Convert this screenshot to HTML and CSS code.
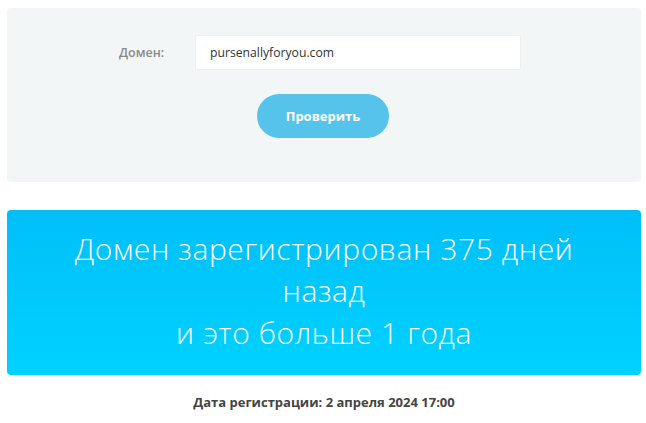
FILE: index.html
```html
<!DOCTYPE html>
<html lang="ru">
<head>
<meta charset="utf-8">
<link rel="stylesheet" href="styles.css">
</head>
<body>
<div class="page">
  <form class="check-panel">
    <div class="form-row">
      <label class="label" for="domain">Домен:</label>
      <div class="input">pursenallyforyou.com</div>
    </div>
    <div class="actions">
      <button type="button" class="btn">Проверить</button>
    </div>
  </form>
  <div class="result">
    <p class="result-text">Домен зарегистрирован 375 дней<br>назад<br>и это больше 1 года</p>
  </div>
  <p class="date">Дата регистрации: 2 апреля 2024 17:00</p>
</div>
</body>
</html>
```
FILE: styles.css
```css
* { box-sizing: border-box; }
html, body { margin: 0; padding: 0; background: #ffffff; }
body { font-family: "Open Sans", "Noto Sans", sans-serif; }
.page {
  padding: 8px 5px 0 7px;
}
.check-panel {
  margin: 0;
  background: #f3f6f7;
  border-radius: 4px;
  padding: 27px 0 44px;
  display: flex;
  flex-direction: column;
  gap: 24px;
}
.form-row {
  display: flex;
  align-items: center;
  padding-left: 112px;
}
.label {
  width: 76px;
  font-size: 12.5px;
  font-weight: 600;
  color: #8a8a8a;
}
.input {
  width: 326px;
  height: 35px;
  background: #ffffff;
  border: 1px solid #eceff0;
  border-radius: 2px;
  padding-left: 14px;
  display: flex;
  align-items: center;
  font-size: 12.2px;
  color: #333333;
}
.actions {
  display: flex;
  justify-content: center;
  padding-right: 2px;
}
.btn {
  width: 132px;
  height: 44px;
  border: none;
  border-radius: 22px;
  background: #56c3eb;
  color: #ffffff;
  font-family: "Open Sans", sans-serif;
  font-weight: 700;
  font-size: 13px;
}
.result {
  margin-top: 28px;
  background: linear-gradient(180deg, #00bff9 0%, #00d2ff 100%);
  border-radius: 4px;
  padding: 18px 0 21px;
  text-align: center;
}
.result-text {
  margin: 0;
  color: #ffffff;
  font-weight: 300;
  font-size: 30px;
  line-height: 42px;
  letter-spacing: 0.6px;
}
.date {
  margin: 18px 0 0;
  text-align: center;
  font-size: 13px;
  font-weight: 700;
  color: #444444;
}
```
